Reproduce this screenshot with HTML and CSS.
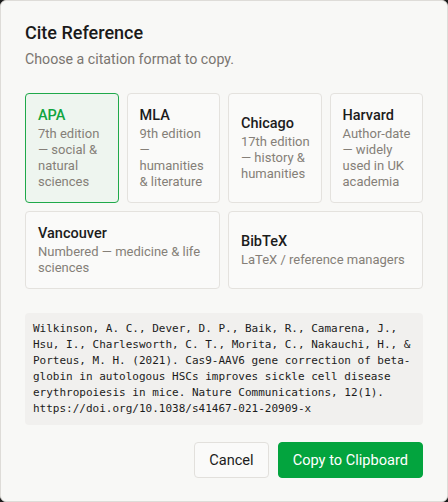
FILE: index.html
```html
<!DOCTYPE html>
<html lang="en">
<head>
<meta charset="utf-8">
<title>Cite Reference</title>
<link rel="stylesheet" href="styles.css">
</head>
<body>
<div class="dialog">
  <h1 class="title">Cite Reference</h1>
  <p class="subtitle">Choose a citation format to copy.</p>
  <div class="formats">
    <div class="card selected">
      <div class="name">APA</div>
      <div class="desc">7th edition — social &amp; natural sciences</div>
    </div>
    <div class="card">
      <div class="name">MLA</div>
      <div class="desc">9th edition — humanities &amp; literature</div>
    </div>
    <div class="card">
      <div class="name">Chicago</div>
      <div class="desc">17th edition — history &amp; humanities</div>
    </div>
    <div class="card">
      <div class="name">Harvard</div>
      <div class="desc">Author-date — widely used in UK academia</div>
    </div>
    <div class="card wide">
      <div class="name">Vancouver</div>
      <div class="desc">Numbered — medicine &amp; life sciences</div>
    </div>
    <div class="card wide">
      <div class="name">BibTeX</div>
      <div class="desc">LaTeX / reference managers</div>
    </div>
  </div>
  <pre class="citation">Wilkinson, A. C., Dever, D. P., Baik, R., Camarena, J., Hsu, I., Charlesworth, C. T., Morita, C., Nakauchi, H., &amp; Porteus, M. H. (2021). Cas9-AAV6 gene correction of beta-globin in autologous HSCs improves sickle cell disease erythropoiesis in mice. Nature Communications, 12(1). https://doi.org/10.1038/s41467-021-20909-x</pre>
  <div class="actions">
    <button class="btn btn-cancel">Cancel</button>
    <button class="btn btn-primary">Copy to Clipboard</button>
  </div>
</div>
</body>
</html>
```

FILE: styles.css
```css
* { box-sizing: border-box; }
html, body { margin: 0; padding: 0; }
body {
  background: #1c1c1c;
  font-family: Roboto, "Noto Sans", sans-serif;
  width: 448px;
  height: 502px;
}
.dialog {
  width: 448px;
  height: 502px;
  background: #f8f8f6;
  border: 1px solid #dedcd8;
  border-radius: 6px;
  padding: 20px 24px;
  display: flex;
  flex-direction: column;
}
.title {
  margin: 0;
  font-size: 18px;
  line-height: 24px;
  font-weight: 500;
  color: #1a1a1a;
}
.subtitle {
  margin: 4px 0 0;
  font-size: 14.2px;
  line-height: 20px;
  color: #7a7570;
}
.formats {
  margin-top: 24px;
  display: grid;
  grid-template-columns: repeat(4, 1fr);
  gap: 8px;
}
.card {
  background: #fafaf9;
  border: 1px solid #e4e2de;
  border-radius: 4px;
  padding: 12px 8px 12px 12px;
  display: flex;
  flex-direction: column;
  justify-content: center;
}
.card.wide { grid-column: span 2; }
.card.selected {
  background: #eef5ef;
  border-color: #1fa94a;
}
.name {
  font-size: 14.5px;
  line-height: 20px;
  font-weight: 500;
  color: #1c1c1c;
}
.selected .name { color: #11a53f; }
.desc {
  font-size: 13px;
  line-height: 16px;
  color: #857f78;
}
.citation {
  margin: 24px 0 0;
  background: #f1f0ee;
  border-radius: 4px;
  padding: 8px;
  font-family: "DejaVu Sans Mono", monospace;
  font-size: 11px;
  line-height: 16px;
  color: #1c1c1c;
  white-space: pre-wrap;
  word-break: normal;
}
.actions {
  margin-top: 17px;
  display: flex;
  justify-content: flex-end;
  gap: 9px;
}
.btn {
  height: 36px;
  padding: 0 14px;
  border-radius: 4px;
  font-family: Roboto, "Noto Sans", sans-serif;
  font-size: 14.6px;
  cursor: pointer;
}
.btn-cancel {
  background: #fafaf9;
  border: 1px solid #e2e0dc;
  color: #1c1c1c;
}
.btn-primary {
  background: #03a43e;
  border: 1px solid #03a43e;
  color: #ffffff;
}
```
